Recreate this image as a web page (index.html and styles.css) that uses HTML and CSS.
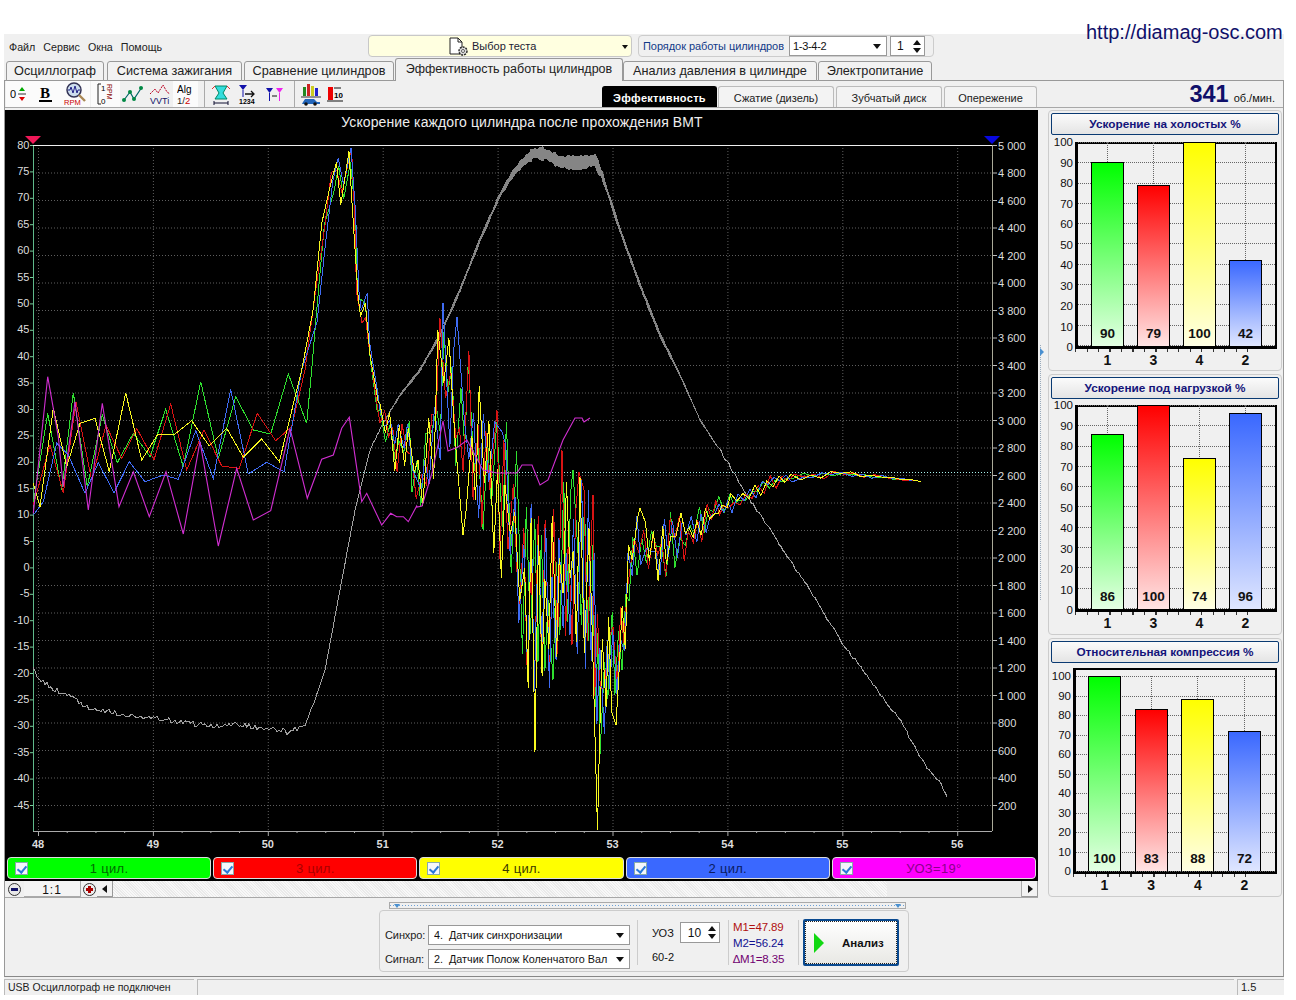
FILE: index.html
```html
<!DOCTYPE html>
<html lang="ru">
<head>
<meta charset="utf-8">
<title>Diamag</title>
<link rel="stylesheet" href="styles.css">
</head>
<body>
<a class="site-link">http://diamag-osc.com</a>
<div class="app">
  <header class="topbar">
    <nav class="menu"><span>Файл</span><span>Сервис</span><span>Окна</span><span>Помощь</span></nav>
    <div class="test-select">
      <svg class="doc-icon" width="22" height="20" viewBox="0 0 22 20"><path d="M2 1h8l4 4v12H2z" fill="#fff" stroke="#222"/><path d="M10 1v4h4" fill="none" stroke="#222"/><circle cx="15" cy="14" r="4" fill="#ddd" stroke="#222" stroke-width="1.4" stroke-dasharray="2 1"/><circle cx="15" cy="14" r="1.5" fill="#fff" stroke="#222" stroke-width=".7"/></svg>
      <span class="test-label">Выбор теста</span>
      <i class="arrow small"></i>
    </div>
    <div class="order-group">
      <span class="order-label">Порядок работы цилиндров</span>
      <div class="order-select"><span>1-3-4-2</span><i class="arrow"></i></div>
      <div class="spin order-spin"><span>1</span><div class="spin-arrows"><i></i><i></i></div></div>
    </div>
  </header>
  <div class="tabs">
    <div class="tab">Осциллограф</div>
    <div class="tab">Система зажигания</div>
    <div class="tab">Сравнение цилиндров</div>
    <div class="tab active">Эффективность работы цилиндров</div>
    <div class="tab">Анализ давления в цилиндре</div>
    <div class="tab">Электропитание</div>
  </div>
  <main class="frame">
    <div class="toolbar">
      <div class="tools">
        <button class="tool t1 on"><svg width="18" height="18" viewBox="0 0 18 18"><text x="0" y="13" class="ic-t" font-size="11">0</text><path d="M12 2l-3 4h6z" fill="#0a0"/><path d="M8 9h8" stroke="#333"/><path d="M12 16l-3-4h6z" fill="#d00"/></svg></button>
        <button class="tool t2 on"><svg width="16" height="20" viewBox="0 0 16 20"><text x="2" y="14" class="ic-b">B</text><path d="M1 17h13" stroke="#000" stroke-width="2"/></svg></button>
        <button class="tool t3 on"><svg width="22" height="24" viewBox="0 0 22 24"><circle cx="10" cy="8" r="7" fill="#cde" stroke="#335" stroke-width="1.5"/><path d="M4 8h2l1-3 2 6 2-7 2 7 1-3h2" fill="none" stroke="#228"/><path d="M15 13l6 6" stroke="#a85" stroke-width="2.4"/><text x="0" y="23" class="ic-t" font-size="7.5" fill="#c00">RPM</text></svg></button>
        <button class="tool t4 on"><svg width="18" height="24" viewBox="0 0 18 24"><path d="M4 2H1v20h3" fill="none" stroke="#222"/><text x="4" y="9" class="ic-t" font-size="8">1</text><text x="4" y="22" class="ic-t" font-size="8">0</text><text x="2" y="-10" class="ic-t" font-size="7" fill="#800" transform="rotate(90)">RPM</text></svg></button>
        <button class="tool t5"><svg width="22" height="20" viewBox="0 0 22 20"><path d="M2 16l6-8 4 7 8-12" fill="none" stroke="#066" stroke-width="1.2"/><circle cx="2" cy="16" r="2" fill="#084"/><circle cx="8" cy="8" r="2" fill="#084"/><circle cx="12" cy="15" r="2" fill="#084"/><circle cx="19" cy="4" r="2" fill="#084"/></svg></button>
        <button class="tool t6"><svg width="22" height="24" viewBox="0 0 22 24"><path d="M1 12l5-5 3 4 5-8 4 7 3 2" fill="none" stroke="#b02" stroke-dasharray="2 1"/><text x="1" y="22" class="ic-t" font-size="9" fill="#116">VVTi</text></svg></button>
        <button class="tool t7 on"><svg width="18" height="24" viewBox="0 0 18 24"><text x="0" y="11" class="ic-t" font-size="10">Alg</text><text x="0" y="22" class="ic-t" font-size="9.5" fill="#222">1/<tspan fill="#c00">2</tspan></text></svg></button>
      </div>
      <i class="tool-sep s1"></i>
      <div class="tools g2">
        <button class="tool"><svg width="20" height="22" viewBox="0 0 20 22"><path d="M4 3h12l-4 7 4 6H4l4-6z" fill="#3dd" stroke="#086"/><path d="M3 20h14M3 18v4M17 18v4" stroke="#113"/><path d="M1 6l3-3M19 6l-3-3" stroke="#d33"/></svg></button>
        <button class="tool"><svg width="18" height="22" viewBox="0 0 18 22"><path d="M1 2h8L5 7z" fill="#11a"/><path d="M5 7v7" stroke="#11a"/><path d="M7 11h9m-3-3l3 3-3 3" fill="none" stroke="#111" stroke-width="1.3"/><text x="1" y="21" class="ic-t" font-size="7" font-weight="700">1234</text></svg></button>
        <button class="tool"><svg width="18" height="18" viewBox="0 0 18 18"><path d="M0 3h7L3.500 8z" fill="#11a"/><path d="M3.500 8v8" stroke="#11a"/><path d="M10 3h7l-3.500 5z" fill="#e2e"/><path d="M13.500 8v8" stroke="#e2e"/><path d="M6 11h5" stroke="#111"/></svg></button>
      </div>
      <i class="tool-sep s2"></i>
      <div class="tools g3">
        <button class="tool"><svg width="20" height="24" viewBox="0 0 20 24"><path d="M2 5h3v9H2z" fill="#282"/><path d="M6 2h3v12H6z" fill="#c22"/><path d="M10 4h3v10h-3z" fill="#cc2"/><path d="M14 6h3v8h-3z" fill="#22c"/><path d="M0 15h20" stroke="#333"/><path d="M2 20l2-3h9l3 3h3v2H1z" fill="#26b"/><circle cx="5" cy="22" r="1.800" fill="#111"/><circle cx="14" cy="22" r="1.800" fill="#111"/></svg></button>
        <button class="tool"><svg width="16" height="16" viewBox="0 0 16 16"><path d="M1 1h5v13H1z" fill="#e00"/><path d="M0 15h16M7 2h7" stroke="#111"/><text x="7" y="12" class="ic-t" font-size="8" font-weight="700">10</text></svg></button>
      </div>
      <div class="subtabs">
        <div class="subtab active">Эффективность</div>
        <div class="subtab">Сжатие (дизель)</div>
        <div class="subtab">Зубчатый диск</div>
        <div class="subtab">Опережение</div>
      </div>
      <div class="rpm"><b>341</b><span>об./мин.</span></div>
    </div>
    <div class="work">
      <section class="scope">
        <div class="scope-black">
          <svg id="chart" class="chart" width="1033" height="747" viewBox="5 110 1033 747"></svg>
          <div class="legend">
            <div class="chan c-green"><i class="check"></i><span>1 цил.</span></div>
            <div class="chan c-red"><i class="check"></i><span>3 цил.</span></div>
            <div class="chan c-yellow"><i class="check"></i><span>4 цил.</span></div>
            <div class="chan c-blue"><i class="check"></i><span>2 цил.</span></div>
            <div class="chan c-magenta"><i class="check"></i><span>УОЗ=19°</span></div>
          </div>
        </div>
        <div class="scrollrow">
          <i class="zoom-btn minus"></i>
          <div class="ratio">1:1</div>
          <i class="zoom-btn plus"></i>
          <div class="scroll-arrow left"></div>
          <div class="track"><div class="thumb"></div></div>
          <div class="scroll-arrow right"></div>
        </div>
      </section>
      <div class="vsplit"></div>
      <aside class="side">
        <section class="panel">
          <h3 class="panel-head">Ускорение на холостых %</h3>
          <div class="plot">
            <div class="yaxis"><span>100</span><span>90</span><span>80</span><span>70</span><span>60</span><span>50</span><span>40</span><span>30</span><span>20</span><span>10</span><span>0</span></div>
            <div class="plot-frame">
              <div class="grid"><i></i><i></i><i></i><i></i><i></i><i></i><i></i><i></i><i></i><i></i><i></i></div>
              <div class="bars">
                <div class="col"><div class="bar green" style="height:90%"><b>90</b></div></div>
                <div class="col"><div class="bar red" style="height:79%"><b>79</b></div></div>
                <div class="col"><div class="bar yellow" style="height:100%"><b>100</b></div></div>
                <div class="col"><div class="bar blue" style="height:42%"><b>42</b></div></div>
              </div>
            </div>
          </div>
          <div class="xlabels"><span>1</span><span>3</span><span>4</span><span>2</span></div>
        </section>
        <section class="panel second">
          <h3 class="panel-head">Ускорение под нагрузкой %</h3>
          <div class="plot">
            <div class="yaxis"><span>100</span><span>90</span><span>80</span><span>70</span><span>60</span><span>50</span><span>40</span><span>30</span><span>20</span><span>10</span><span>0</span></div>
            <div class="plot-frame">
              <div class="grid"><i></i><i></i><i></i><i></i><i></i><i></i><i></i><i></i><i></i><i></i><i></i></div>
              <div class="bars">
                <div class="col"><div class="bar green" style="height:86%"><b>86</b></div></div>
                <div class="col"><div class="bar red" style="height:100%"><b>100</b></div></div>
                <div class="col"><div class="bar yellow" style="height:74%"><b>74</b></div></div>
                <div class="col"><div class="bar blue" style="height:96%"><b>96</b></div></div>
              </div>
            </div>
          </div>
          <div class="xlabels"><span>1</span><span>3</span><span>4</span><span>2</span></div>
        </section>
        <section class="panel last">
          <h3 class="panel-head">Относительная компрессия %</h3>
          <div class="plot">
            <div class="yaxis"><span>100</span><span>90</span><span>80</span><span>70</span><span>60</span><span>50</span><span>40</span><span>30</span><span>20</span><span>10</span><span>0</span></div>
            <div class="plot-frame">
              <div class="grid"><i></i><i></i><i></i><i></i><i></i><i></i><i></i><i></i><i></i><i></i><i></i></div>
              <div class="bars">
                <div class="col"><div class="bar green" style="height:100%"><b>100</b></div></div>
                <div class="col"><div class="bar red" style="height:83%"><b>83</b></div></div>
                <div class="col"><div class="bar yellow" style="height:88%"><b>88</b></div></div>
                <div class="col"><div class="bar blue" style="height:72%"><b>72</b></div></div>
              </div>
            </div>
          </div>
          <div class="xlabels"><span>1</span><span>3</span><span>4</span><span>2</span></div>
        </section>
      </aside>
    </div>
    <div class="controls">
      <div class="hsplit"><i class="tri"></i><i class="tri"></i></div>
      <div class="ctl-panel">
        <div class="sync">
          <div class="sync-row"><label>Синхро:</label><div class="combo"><span>4.&nbsp; Датчик синхронизации</span><i class="arrow"></i></div></div>
          <div class="sync-row"><label>Сигнал:</label><div class="combo"><span>2.&nbsp; Датчик Полож Коленчатого Вал</span><i class="arrow"></i></div></div>
        </div>
        <i class="ctl-sep"></i>
        <div class="uoz">
          <div class="uoz-row"><span>УОЗ</span><div class="spin uoz-spin"><span>10</span><div class="spin-arrows"><i></i><i></i></div></div></div>
          <div class="uoz-teeth">60-2</div>
        </div>
        <i class="ctl-sep"></i>
        <div class="metrics"><span class="m1">M1=47.89</span><span class="m2">M2=56.24</span><span class="m3">∆M1=8.35</span></div>
        <i class="ctl-sep"></i>
        <button class="analyze"><svg width="12" height="20" viewBox="0 0 12 20"><path d="M1 0l10 10L1 20z" fill="#12d812"/></svg><span>Анализ</span></button>
      </div>
    </div>
  </main>
  <footer class="status">
    <div class="st-cell st-a">USB Осциллограф не подключен</div>
    <div class="st-cell st-b"></div>
    <div class="st-cell st-c">1.5</div>
  </footer>
</div>
<script src="chart.js"></script>
</body>
</html>
```
FILE: styles.css
```css
* { box-sizing: border-box; }
html, body { margin: 0; padding: 0; background: #fff; }
body { font-family: "Liberation Sans", Arial, sans-serif; font-size: 11px; color: #111; height: 1000px; overflow: hidden; position: relative; }
.site-link { position: absolute; left: 1086px; top: 20px; font-size: 20px; line-height: 24px; color: #10106a; z-index: 2; }
.app { width: 1280px; margin: 34px 0 0 4px; background: #f0f0f0; height: 961px; }

.topbar { height: 24px; position: relative; display: flex; align-items: flex-start; padding-top: 1px; }
.menu { width: 364px; padding: 6px 0 0 5px; display: flex; gap: 8px; font-size: 10.700px; line-height: 13px; color: #222; }
.test-select { width: 264px; height: 22px; background: #ffffe0; border: 1px solid #c8c8c8; border-radius: 4px; display: flex; align-items: center; padding-left: 79px; position: relative; }
.doc-icon { flex: none; margin-top: 1px; }
.test-label { margin-left: 2px; font-size: 11px; color: #223; }
.arrow { display: block; width: 0; height: 0; border-left: 4px solid transparent; border-right: 4px solid transparent; border-top: 5px solid #111; }
.arrow.small { position: absolute; right: 3px; top: 9px; border-left-width: 3px; border-right-width: 3px; border-top-width: 4px; }
.order-group { margin-left: 6px; width: 296px; height: 22px; border: 1px solid #ccc; border-radius: 4px; display: flex; align-items: center; padding-left: 4px; }
.order-label { width: 146px; font-size: 11px; letter-spacing: -.06px; color: #123a88; white-space: nowrap; }
.order-select { width: 98px; height: 20px; background: #fff; border: 1px solid #999; display: flex; align-items: center; justify-content: space-between; padding: 0 5px 0 3px; font-size: 11px; letter-spacing: -.3px; }
.spin { background: #fff; border: 1px solid #999; display: flex; align-items: center; justify-content: space-between; }
.order-spin { width: 35px; height: 20px; margin-left: 3px; padding: 0 3px 0 6px; font-size: 12px; }
.spin-arrows { display: flex; flex-direction: column; gap: 3px; }
.spin-arrows i { display: block; width: 0; height: 0; border-left: 4px solid transparent; border-right: 4px solid transparent; border-bottom: 5px solid #111; }
.spin-arrows i:last-child { border-bottom: 0; border-top: 5px solid #111; }

.tabs { height: 23px; display: flex; align-items: flex-end; padding-left: 2px; position: relative; z-index: 1; margin-bottom: -1px; }
.tab { height: 20px; background: #f2f2f2; border: 1px solid #999; border-radius: 3px 3px 0 0; font-size: 12.700px; line-height: 19px; text-align: center; color: #222; white-space: nowrap; margin-right: 2px; }
.tab:nth-child(1) { width: 98px; margin-right: 3px; }
.tab:nth-child(2) { width: 135px; margin-right: 2px; }
.tab:nth-child(3) { width: 150px; margin-right: 1px; }
.tab:nth-child(4) { width: 228px; margin-right: 0; }
.tab:nth-child(5) { width: 194px; margin-right: 1px; }
.tab:nth-child(6) { width: 114px; }
.tab.active { height: 23px; background: #f0f0f0; border-bottom: 0; font-size: 12.500px; line-height: 21px; padding-bottom: 2px; }

.frame { height: 897px; border: 1px solid #999; border-bottom: 1px solid #888; display: block; }
.toolbar { height: 27px; display: flex; align-items: flex-end; border-bottom: 1px solid #a8a8a8; padding-left: 1px; position: relative; }
.tools { display: flex; align-items: center; height: 26px; }
.tool { height: 26px; padding: 0; border: 0; background: transparent; display: flex; align-items: center; justify-content: center; }
.tool.on { background: #fbfbfb; }
.t1 { width: 26px; } .t2 { width: 27px; } .t3 { width: 31px; margin-right: 1px; }
.t4 { width: 29px; } .t5 { width: 26px; } .t6 { width: 27px; } .t7 { width: 25px; }
.tool-sep { width: 1px; height: 26px; background: #aaa; flex: none; }
.s1 { margin: 0 0 0 6px; }
.g2 { margin-left: 4px; }
.g2 .tool:nth-child(1) { width: 24px; } .g2 .tool:nth-child(2) { width: 27px; } .g2 .tool:nth-child(3) { width: 29px; }
.s2 { margin-left: 5px; }
.g3 { margin-left: 4px; }
.g3 .tool:nth-child(1) { width: 24px; } .g3 .tool:nth-child(2) { width: 24px; }
.ic-t { font-family: "Liberation Sans", sans-serif; }
.ic-b { font-family: "Liberation Serif", serif; font-size: 15px; font-weight: 700; }
.subtabs { position: absolute; left: 597px; bottom: 0; display: flex; align-items: flex-end; gap: 2px; }
.subtab { height: 21px; width: 106px; border: 1px solid #bbb; border-bottom: 0; border-radius: 3px 3px 0 0; font-size: 11px; line-height: 22px; text-align: center; color: #222; background: #f3f3f3; white-space: nowrap; }
.subtab.active { width: 115px; background: #000; color: #fff; font-weight: 700; border-color: #000; margin-right: -1px; letter-spacing: .3px; }
.subtab:nth-child(2) { width: 116px; }
.subtab:nth-child(4) { width: 93px; }
.rpm { position: absolute; right: 8px; top: -1px; display: flex; align-items: baseline; gap: 5px; }
.rpm b { font-size: 23.500px; line-height: 28px; color: #10106a; }
.rpm span { font-size: 11px; }

.work { display: flex; height: 790px; padding-top: 2px; }
.scope { width: 1033px; flex: none; }
.scope-black { background: #000; height: 771px; }
.chart { display: block; }
.legend { height: 22px; display: flex; gap: 2px; padding: 0 2px; }
.chan { flex: 1; border: 1px solid #ddd; border-radius: 4px; display: flex; align-items: center; position: relative; font-size: 13px; justify-content: center; }
.chan span { letter-spacing: .3px; }
.check { position: absolute; left: 7px; top: 4px; width: 13px; height: 13px; background: #f4f6fb; border: 1px solid #8aa; }
.check::after { content: ""; position: absolute; left: 3px; top: 1px; width: 4px; height: 7px; border: solid #2a78d8; border-width: 0 2px 2px 0; transform: rotate(40deg); }
.c-green { background: #00ff00; color: #006a00; }
.c-red { background: #ff0000; color: #a80000; }
.c-yellow { background: #ffff00; color: #3a3a00; }
.c-blue { background: #3a68ff; color: #0a1c60; }
.c-magenta { background: #ff00ff; color: #8a008a; }
.scrollrow { height: 17px; display: flex; align-items: center; border-bottom: 1px solid #a8a8a8; padding-left: 3px; background: #f0f0f0; }
.zoom-btn { width: 13px; height: 13px; border: 1px solid #333; border-radius: 50%; background: #e8e8e8; position: relative; flex: none; }
.zoom-btn::before { content: ""; position: absolute; left: 2px; right: 2px; top: 4px; height: 3px; background: #116; }
.zoom-btn.plus { margin-left: 2px; border-color: #333; background: #eee; }
.zoom-btn.plus::before { background: #a00; left: 2px; right: 2px; }
.zoom-btn.plus::after { content: ""; position: absolute; left: 4px; top: 2px; bottom: 2px; width: 3px; background: #a00; }
.ratio { width: 57px; height: 16px; margin-left: 3px; background: #f4f4f4; border-bottom: 1px solid #aaa; border-right: 1px solid #aaa; text-align: center; font-size: 12px; line-height: 18px; letter-spacing: 1px; }
.scroll-arrow { width: 16px; height: 16px; flex: none; position: relative; background: #f2f2f2; border-bottom: 1px solid #999; border-right: 1px solid #999; }
.scroll-arrow::after { content: ""; position: absolute; top: 4px; left: 5px; width: 0; height: 0; border-top: 4px solid transparent; border-bottom: 4px solid transparent; }
.scroll-arrow.left { margin-left: 1px; }
.scroll-arrow.left::after { border-right: 5px solid #111; }
.scroll-arrow.right::after { border-left: 5px solid #111; left: 6px; }
.track { flex: 1; height: 16px; background: repeating-linear-gradient(45deg, #f8f8f8 0 1px, #eaeaea 1px 2px); display: flex; justify-content: flex-end; }
.thumb { width: 135px; height: 16px; background: #ececec; border-right: 1px solid #aaa; }

.vsplit { width: 10px; flex: none; position: relative; }
.vsplit::before { content: ""; position: absolute; left: 2px; top: 235px; height: 255px; width: 2px; border-left: 1px dotted #9ab; }
.vsplit::after { content: ""; position: absolute; left: 2px; top: 238px; width: 0; height: 0; border-top: 4px solid transparent; border-bottom: 4px solid transparent; border-left: 4px solid #4a90d0; }
.side { width: 234px; flex: none; display: flex; flex-direction: column; gap: 3px; }
.panel { height: 261px; border: 1px solid #ccc; border-radius: 4px; padding: 2px; }
.panel.last { height: 259px; }
.panel-head { margin: 0; height: 22px; border: 1px solid #0a3a72; border-radius: 2px; background: linear-gradient(#fbfbfb, #e4e4e4); text-align: center; font-size: 11.800px; font-weight: 700; line-height: 21px; color: #14147a; }
.plot { display: flex; height: 207px; margin-top: 7px; }
.second .plot { margin-top: 6px; }
.yaxis { width: 24px; flex: none; display: flex; flex-direction: column; justify-content: space-between; align-items: flex-end; font-size: 11.500px; color: #111; padding-right: 2px; height: 205px; }
.yaxis span { display: block; height: 0; line-height: 0; }
.plot-frame { width: 202px; height: 207px; border: 2px solid #000; border-bottom-width: 3px; border-left-width: 3px; position: relative; }
.grid { position: absolute; left: 0; right: 0; top: -2px; height: 204px; display: flex; flex-direction: column; justify-content: space-between; }
.grid i { display: block; height: 0; border-top: 1px dotted #666; }
.bars { position: relative; height: calc(100% + 2px); margin-top: -2px; display: flex; gap: 13px; padding-left: 13px; }
.col { width: 33px; height: 100%; display: flex; align-items: flex-end; position: relative; }
.col::before { content: ""; position: absolute; left: 16px; top: 0; bottom: 0; border-left: 1px dotted #666; }
.bar { width: 100%; border: 1px solid #000; border-bottom: 0; position: relative; display: flex; align-items: flex-end; justify-content: center; padding-bottom: 5px; }
.bar b { font-size: 13.500px; line-height: 14px; color: #111; }
.green { background: linear-gradient(#00ff00, #e4ffe4); }
.red { background: linear-gradient(#ff0000, #ffe4e4); }
.yellow { background: linear-gradient(#ffff00, #ffffe4); }
.blue { background: linear-gradient(#3a68ff, #dfe6ff); }
.xlabels { display: flex; gap: 13px; padding-left: 40px; height: 19px; background: repeating-linear-gradient(90deg, #333 0 1px, transparent 1px 11.500px) 24px 0 / 175px 3px no-repeat; }
.xlabels span { width: 33px; text-align: center; font-size: 14px; font-weight: 700; line-height: 21px; padding-top: 1px; }
.last .plot { margin-top: 5px; height: 206px; }
.last .yaxis { padding-top: 8px; width: 22px; height: 203px; }
.last .plot-frame { width: 204px; height: 206px; }
.last .grid { top: 6px; height: 196px; }
.last .bars { gap: 13.670px; padding-left: 12px; height: calc(100% - 6px); margin-top: 6px; }
.last .xlabels { padding-left: 37px; gap: 13.670px; background-position: 22px 0; background-size: 177px 3px; }

.controls { height: 78px; padding-top: 4px; display: flex; flex-direction: column; align-items: center; }
.hsplit { width: 517px; height: 7px; border: 1px solid #aaa; margin-bottom: 1px; margin-left: 6px; display: flex; justify-content: space-between; align-items: center; padding: 0 4px; background: repeating-linear-gradient(90deg, #6aa0d8 0 1px, #f0f0f0 1px 3px) 0 2px / 100% 1px no-repeat; }
.tri { width: 0; height: 0; border-left: 3px solid transparent; border-right: 3px solid transparent; border-top: 4px solid #4a90d0; }
.ctl-panel { width: 530px; height: 62px; border: 1px solid #ccc; border-radius: 4px; display: flex; align-items: stretch; padding: 3px 0 3px 5px; }
.sync { width: 245px; display: flex; flex-direction: column; gap: 4px; padding-top: 11px; flex: none; }
.sync-row { display: flex; align-items: center; height: 20px; }
.sync-row label { width: 43px; font-size: 11px; letter-spacing: -.1px; color: #222; flex: none; }
.combo { width: 202px; height: 20px; background: #fff; border: 1px solid #999; display: flex; align-items: center; justify-content: space-between; padding: 0 5px; font-size: 10.800px; gap: 6px; }
.combo span { overflow: hidden; white-space: nowrap; flex: 1; }
.combo .arrow { flex: none; }
.ctl-sep { width: 1px; background: #ccc; flex: none; margin-top: 6px; margin-bottom: 3px; }
.ctl-sep:nth-of-type(1) { margin-left: 7px; }
.uoz { width: 90px; padding: 8px 0 0 14px; flex: none; font-size: 11px; }
.uoz-row { display: flex; align-items: center; gap: 6px; height: 21px; margin-top: 0; }
.uoz-spin { width: 40px; height: 21px; padding: 0 3px 0 7px; font-size: 12px; margin-left: 0; }
.uoz-teeth { margin-top: 7px; line-height: 14px; }
.metrics { width: 69px; flex: none; padding: 5px 0 0 4px; display: flex; flex-direction: column; font-size: 11.500px; line-height: 16px; letter-spacing: -.1px; }
.m1 { color: #b01010; } .m2 { color: #101090; } .m3 { color: #700070; }
.analyze { width: 96px; height: 47px; margin: 5px 0 0 4px; border: 2px solid #0a4a90; outline: 1px dotted #222; outline-offset: -3px; background: linear-gradient(#fff, #e8e8e4); border-radius: 2px; display: flex; align-items: center; padding: 0 0 0 8px; font-family: "Liberation Sans", sans-serif; }
.analyze span { font-size: 11.500px; font-weight: 700; margin-left: 17px; color: #111; }

.status { height: 16px; display: flex; margin-top: 2px; gap: 3px; background: #f0f0f0; }
.st-cell { border-left: 1px solid #bbb; border-top: 1px solid #bbb; height: 16px; font-size: 10.500px; line-height: 15px; padding-left: 3px; color: #222; }
.st-a { width: 190px; }
.st-b { flex: 1; }
.st-c { width: 47px; font-size: 11px; }
```
FILE: chart.js
```js
(function () {
  var NS = 'http://www.w3.org/2000/svg';
  var svg = document.getElementById('chart');
  function el(name, attrs, text) {
    var e = document.createElementNS(NS, name);
    for (var k in attrs) e.setAttribute(k, attrs[k]);
    if (text !== undefined) e.textContent = text;
    svg.appendChild(e);
    return e;
  }
  function rng(seed) {
    var s = seed >>> 0;
    return function () {
      s = (s * 1664525 + 1013904223) >>> 0;
      return ((s >>> 8) & 0xffff) / 65535;
    };
  }
  function interp(table, x) {
    for (var i = 1; i < table.length; i++) {
      if (x <= table[i][0]) {
        var a = table[i - 1], b = table[i], t = (x - a[0]) / (b[0] - a[0]);
        return a.slice(1).map(function (v, j) { return v + (b[j + 1] - v) * t; });
      }
    }
    return table[table.length - 1].slice(1);
  }
  var X0 = 33, X1 = 992, YT = 145, YB = 831;
  var font = { 'font-family': 'Liberation Sans, sans-serif', 'font-size': 11 };

  // Grid
  var i, y, x;
  for (i = 0; i <= 24; i++) {
    y = YT + 27.5 * i;
    el('line', { x1: X0, x2: X1, y1: y + .5, y2: y + .5, stroke: '#5e5e5e', 'stroke-dasharray': '1 2' });
    el('line', { x1: X1, x2: X1 + 5, y1: y + .5, y2: y + .5, stroke: '#bbb' });
    var v = 5000 - 200 * i;
    var label = v >= 1000 ? Math.floor(v / 1000) + ' ' + ('00' + (v % 1000)).slice(-3) : String(v);
    el('text', Object.assign({ x: 998, y: y + 4.5, fill: '#ddd' }, font), label);
  }
  for (i = 0; i <= 8; i++) {
    x = 38 + 114.9 * i;
    el('line', { x1: x + .5, x2: x + .5, y1: YT, y2: YB, stroke: '#5e5e5e', 'stroke-dasharray': '1 2' });
    el('text', Object.assign({ x: x, y: 848, fill: '#ddd', 'text-anchor': 'middle', 'font-weight': 700 }, font), String(48 + i));
  }
  for (i = 0; i <= 32; i++) {
    x = 38 + 28.725 * i;
    el('line', { x1: x + .5, x2: x + .5, y1: YB, y2: YB + (i % 4 ? 2 : 5), stroke: '#aaa' });
  }
  for (i = 0; i <= 25; i++) {
    y = YT + 26.4 * i;
    el('line', { x1: X0 - 3, x2: X0, y1: y + .5, y2: y + .5, stroke: '#7c9' });
    el('text', Object.assign({ x: 29.5, y: y + 3.5, fill: '#ddd', 'text-anchor': 'end' }, font), String(80 - 5 * i));
  }
  el('line', { x1: X0 + .5, x2: X0 + .5, y1: YT, y2: YB, stroke: '#5fb98a' });
  el('line', { x1: X1 + .5, x2: X1 + .5, y1: YT, y2: YB, stroke: '#aa9' });
  el('line', { x1: X0, x2: X1, y1: YT + .5, y2: YT + .5, stroke: '#eee' });
  el('line', { x1: X0, x2: X1, y1: YB + .5, y2: YB + .5, stroke: '#aaa' });
  el('path', { d: 'M25 136h16l-8 8z', fill: '#f01858' });
  el('path', { d: 'M984 136h16l-8 8z', fill: '#0808e0' });
  el('text', Object.assign({ x: 522, y: 127, fill: '#eee', 'text-anchor': 'middle' }, font, { 'font-size': 14, 'letter-spacing': .1 }),
    'Ускорение каждого цилиндра после прохождения ВМТ');

  // RPM trace
  var rpm = [[33, 670], [42, 682], [50, 687], [65, 695], [90, 708], [130, 715], [170, 720], [200, 725], [240, 725], [270, 730], [290, 732], [305, 725], [315, 700], [325, 670], [340, 590], [355, 510], [370, 450], [382, 425], [400, 395], [420, 370], [440, 335], [460, 290], [480, 240], [500, 195], [512, 175], [522, 163], [534, 153], [546, 154], [560, 162], [580, 163], [595, 160], [602, 175], [620, 230], [640, 285], [660, 335], [680, 375], [700, 420], [720, 450], [750, 500], [780, 545], [810, 590], [840, 640], [870, 680], [900, 720], [925, 765], [940, 782], [948, 800]];
  var r = rng(77), thin = [], up = [], lo = [];
  function hw(x) {
    return interp([[380, 1], [440, 2.5], [500, 3], [525, 5.5], [595, 7], [605, 4], [650, 3], [690, 1.5], [720, .6], [950, .5]], x)[0];
  }
  for (x = 33; x <= 948; x += 2) {
    var cy = interp(rpm, x)[0];
    var jit = (x < 300 ? 3 : x > 720 ? 1.6 : .6) * (r() * 2 - 1);
    thin.push(x + ',' + (cy + jit).toFixed(1));
    if (x >= 380 && x <= 720) {
      var w = hw(x) * (.7 + r() * .6);
      up.push(x + ',' + (cy - w).toFixed(1));
      lo.unshift(x + ',' + (cy + w).toFixed(1));
    }
  }
  el('polyline', { points: thin.join(' '), fill: 'none', stroke: '#a0a0a0', 'shape-rendering': 'crispEdges' });
  el('polygon', { points: up.concat(lo).join(' '), fill: '#858585', 'shape-rendering': 'crispEdges' });

  // Cursor line
  el('line', { x1: X0, x2: X1, y1: 472.5, y2: 472.5, stroke: '#a8f4f0', 'stroke-dasharray': '1 2' });

  var env = [[378, 395, 440], [395, 410, 475], [410, 420, 490], [420, 470, 515], [428, 400, 500], [438, 320, 470], [445, 305, 460], [458, 320, 520], [470, 345, 510], [485, 390, 540], [497, 400, 570], [510, 430, 610], [520, 460, 640], [530, 500, 700], [540, 520, 680], [550, 520, 690], [565, 475, 640], [575, 470, 650], [590, 490, 680], [595, 560, 700], [598, 600, 740], [603, 640, 750], [610, 610, 720], [618, 605, 690], [625, 605, 660], [630, 515, 590], [640, 515, 590], [660, 510, 585], [680, 505, 570], [700, 505, 545], [720, 495, 520], [740, 490, 510], [770, 475, 490], [800, 473, 483], [840, 470, 476], [880, 475, 479], [920, 481, 482]];

  var peak = [[315, 310], [325, 235], [333, 185], [338, 165], [343, 195], [351, 150], [354, 205], [358, 300], [362, 310], [366, 305], [370, 350], [378, 405]];

  function build(seed, left, spikes) {
    var rnd = rng(seed), pts = left.slice();
    var shift = (rnd() - .5) * 5;
    peak.forEach(function (p) {
      pts.push([p[0] + shift * (p[0] < 350 ? 1 : .4) + (rnd() - .5) * 2.5, Math.max(148, p[1] + (rnd() - .5) * 26)]);
    });
    var px = 380, hi = rnd() > .5;
    while (px <= 921) {
      var e = interp(env, px), top = e[0], bot = e[1], q, a = rnd();
      hi = !hi;
      if (px > 500 && px < 630) {
        q = hi ? a * a * .5 : 1 - a * a * .5;
      } else {
        q = hi ? a * .55 : .45 + a * .55;
      }
      pts.push([px, top + (bot - top) * q]);
      px += px < 520 ? 3.5 + rnd() * 2.5 : px < 630 ? 2.6 + rnd() * 2 : px < 730 ? 3.5 + rnd() * 2 : px < 790 ? 6 : 10;
    }
    (spikes || []).forEach(function (s) {
      var best = 0, d = 1e9;
      pts.forEach(function (p, k) { var dd = Math.abs(p[0] - s[0]); if (dd < d) { d = dd; best = k; } });
      pts[best] = [s[0], s[1]];
    });
    return pts;
  }
  function zoom(list) {
    return list.map(function (p) { return [p[0] / 3, 370 + p[1] / 3]; });
  }
  var traces = [
    { c: '#2fe02f', s: 11, left: [[100, 400], [143, 130], [185, 360], [220, 68], [262, 350], [307, 135], [352, 278], [400, 190], [450, 260], [497, 118], [550, 290], [602, 35], [655, 265], [707, 80], [760, 180], [812, 192], [865, 12], [920, 160], [935, 0]],
      sp: [[412, 492], [573, 470], [548, 600], [600, 755], [622, 670]] },
    { c: '#d81414', s: 29, left: [[100, 405], [150, 225], [190, 368], [228, 95], [275, 330], [318, 165], [365, 265], [410, 175], [462, 270], [512, 102], [560, 300], [612, 180], [665, 288], [718, 295], [772, 130], [827, 212], [875, 170], [915, 0]],
      sp: [[497, 410], [562, 450], [579, 472], [593, 495], [608, 640]] },
    { c: '#3f6cf4', s: 53, left: [[100, 435], [130, 395], [170, 220], [205, 255], [255, 370], [295, 278], [342, 368], [388, 275], [435, 335], [490, 315], [535, 328], [587, 182], [640, 325], [692, 58], [745, 312], [800, 277], [852, 305], [905, 0]],
      sp: [[443, 303], [457, 317], [502, 432], [637, 516]] },
    { c: '#f8f820', s: 97, left: [[100, 340], [120, 410], [160, 115], [200, 290], [240, 160], [285, 145], [328, 305], [377, 68], [425, 270], [472, 195], [525, 192], [575, 152], [628, 228], [680, 175], [730, 262], [785, 207], [838, 275], [900, 20], [905, 0]],
      sp: [[463, 535], [535, 752], [597.5, 830], [616, 725], [640, 508]] }
  ];
  traces.forEach(function (t) {
    var pts = build(t.s, zoom(t.left), t.sp);
    pts.sort(function (a, b) { return a[0] - b[0]; });
    el('polyline', {
      points: pts.map(function (p) { return p[0].toFixed(1) + ',' + p[1].toFixed(1); }).join(' '),
      fill: 'none', stroke: t.c, 'stroke-width': 1, 'shape-rendering': 'crispEdges'
    });
  });

  // Advance angle trace
  var mag = zoom([[100, 430], [143, 20], [175, 200], [190, 350], [225, 95], [265, 420], [307, 100], [357, 410], [400, 305], [448, 440], [498, 305], [550, 492], [600, 215], [655, 528], [710, 295], [760, 450], [812, 422], [870, 175], [922, 385], [965, 268], [1000, 255], [1025, 175], [1048, 142], [1085, 395], [1100, 370], [1145, 465], [1172, 430], [1190, 440], [1210, 440], [1225, 455], [1250, 408]])
    .concat([[417, 507], [422, 506], [432, 473], [443, 421], [448, 451], [458, 447], [467, 440], [483, 470], [497, 473], [517, 473], [522, 465], [532, 465], [540, 485], [548, 480], [563, 440], [575, 418], [582, 418], [584, 422], [590, 418]]);
  el('polyline', {
    points: mag.map(function (p) { return p[0].toFixed(1) + ',' + p[1].toFixed(1); }).join(' '),
    fill: 'none', stroke: '#d22ed2', 'stroke-width': 1.1
  });
})();
```
